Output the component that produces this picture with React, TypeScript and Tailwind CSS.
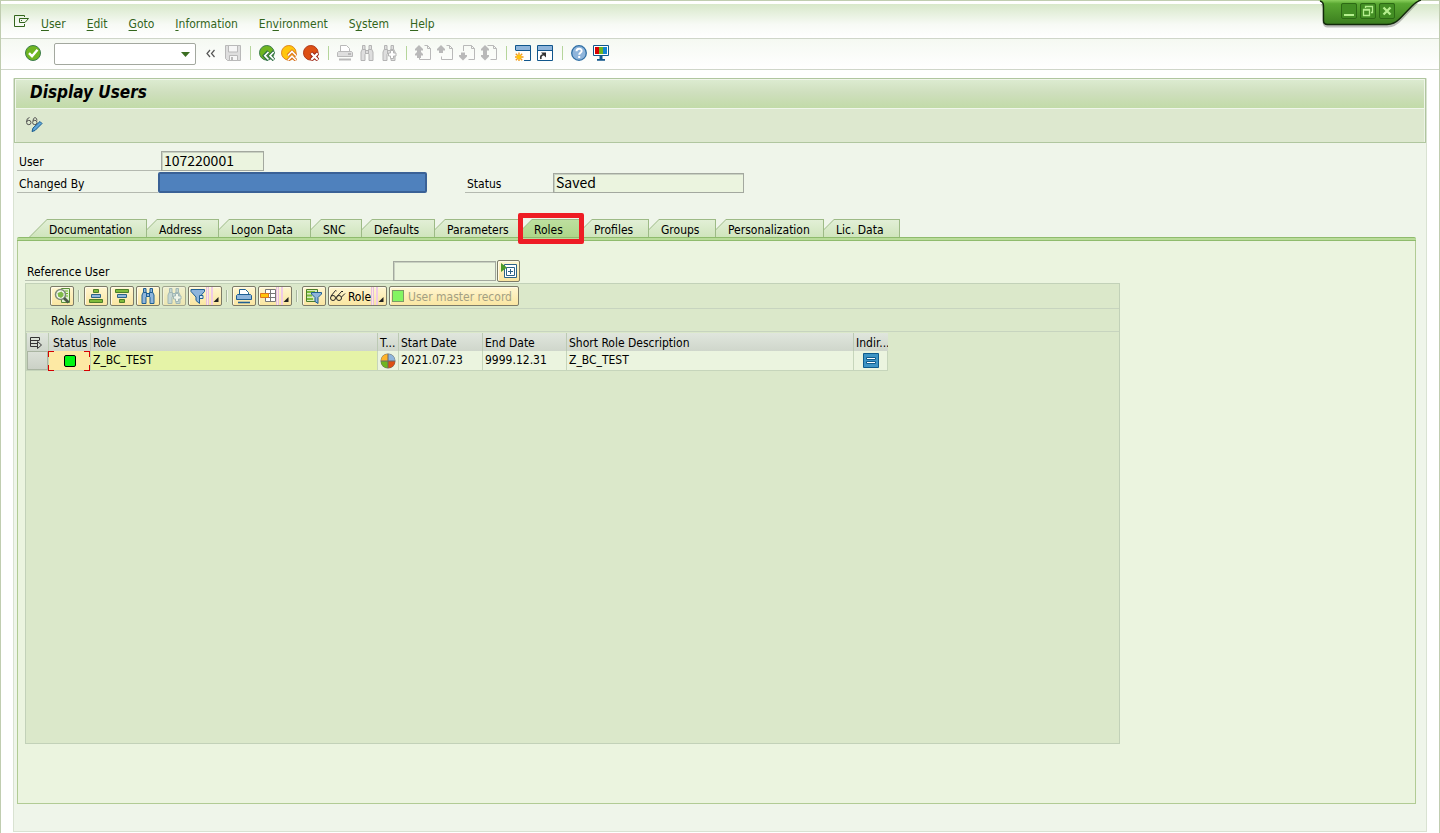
import type { ReactNode } from "react";

const MENUS: [string, string, string][] = [
  ["", "U", "ser"],
  ["", "E", "dit"],
  ["", "G", "oto"],
  ["", "I", "nformation"],
  ["En", "v", "ironment"],
  ["S", "y", "stem"],
  ["", "H", "elp"],
];

function Icon({ children, size = 16 }: { children: ReactNode; size?: number }) {
  return (
    <svg width={size} height={size} viewBox="0 0 16 16" fill="none" aria-hidden="true" className="shrink-0">
      {children}
    </svg>
  );
}

function ToolButton({ label, children }: { label: string; children: ReactNode }) {
  return (
    <button type="button" aria-label={label} className="flex h-[22px] w-[22px] items-center justify-center">
      <Icon>{children}</Icon>
    </button>
  );
}

function ToolSeparator() {
  return (
    <span className="flex w-3 justify-center">
      <span className="h-[14px] w-px bg-[#b5d59b]" />
    </span>
  );
}

function Binoculars({ fill, stroke }: { fill: string; stroke: string }) {
  return (
    <>
      <path
        d="M3.500 .5h2.500v3.500l1 1.500h2l1-1.500V.5h2.500v3.500l1.500 3v8.500h-4v-6l-1-1H7l-1 1v6H2V7l1.500-3z"
        fill={fill}
        stroke={stroke}
      />
      <path d="M3.500 4.500h2.500M10 4.500h2.500M6.500 5v4M9.500 5v4" stroke={stroke} />
    </>
  );
}

function FindPlus({ stroke }: { stroke: string }) {
  return <path d="M9.500 5.500h3v2.500h2.500v3h-2.500v2.500h-3v-2.500H7.500v-3h2z" fill="#fff" stroke={stroke} />;
}

function PageShape() {
  return <path d="M9.500 .5h3l3 3v11h-11v-3M12.500 .5v3h3" stroke="#b9b9b9" />;
}

const UP = "M4 0l4 4v1.500H6V8H2V5.500H0V4z";

function MainToolbar() {
  return (
    <div className="flex h-[31px] items-center border-b border-[#cfd6c9] bg-gradient-to-b from-[#f5f9f2] to-white pb-[2px] pl-[21px]">
      <ToolButton label="Enter">
        <circle cx="8" cy="8" r="7.500" fill="#6fb520" stroke="#3c7c4c" />
        <path d="M4 8.200l3 3 5.500-6.400" stroke="#fff" strokeWidth="2.400" />
      </ToolButton>
      <div className="mt-[2px] ml-[10px] flex h-[22px] w-[142px] items-center rounded-xs border border-[#a3a89f] bg-white">
        <input aria-label="Command" className="h-full min-w-0 flex-1 bg-transparent px-1 outline-none" />
        <button type="button" aria-label="Command history" className="flex w-5 justify-center">
          <svg width="9" height="5" viewBox="0 0 9 5" aria-hidden="true">
            <path d="M0 0h9L4.500 5z" fill="#3c6e22" />
          </svg>
        </button>
      </div>
      <span className="w-1" />
      <ToolButton label="Collapse">
        <path d="M7 5L4 8.500 7 12M11.500 5l-3 3.500 3 3.500" stroke="#555" strokeWidth="1.200" />
      </ToolButton>
      <ToolButton label="Save">
        <path d="M.5 .5h15v15h-13l-2-2z" fill="#dedede" stroke="#b9b9b9" />
        <path d="M3.500 .5h9v6.500h-9zM4.500 10.500h8v5h-8z" fill="#f6f6f6" stroke="#b9b9b9" />
        <path d="M6 12h2v3H6z" fill="#b9b9b9" />
      </ToolButton>
      <ToolSeparator />
      <ToolButton label="Back">
        <circle cx="7.800" cy="7.800" r="7.300" fill="#6fb520" stroke="#3c7c4c" />
        <path d="M9.500 6.500l-4 4.200 4 4.300M15 6.500l-4 4.200 4 4.300" stroke="#2f6e44" strokeWidth="3.600" />
        <path d="M9.500 7l-3.700 3.700L9.500 14.500M14.700 7L11 10.700l3.700 3.800" stroke="#fff" strokeWidth="1.700" />
      </ToolButton>
      <ToolButton label="Exit">
        <circle cx="7.800" cy="7.800" r="7.300" fill="#ffc60b" stroke="#e0851c" />
        <path d="M6.800 10.500l4.200-4 4.200 4M6.800 15.500l4.200-4 4.200 4" stroke="#d9701c" strokeWidth="3.400" />
        <path d="M7 10.500l4-4 4 4M7 15.200l4-4 4 4" stroke="#fff" strokeWidth="1.600" />
      </ToolButton>
      <ToolButton label="Cancel">
        <circle cx="7.800" cy="7.800" r="7.300" fill="#dd5014" stroke="#b0391a" />
        <path d="M8 8l7 7M15 8l-7 7" stroke="#9c2416" strokeWidth="4" />
        <path d="M8.300 8.300l6.400 6.400M14.700 8.300l-6.400 6.400" stroke="#fff" strokeWidth="2.200" />
      </ToolButton>
      <ToolSeparator />
      <ToolButton label="Print">
        <path d="M3.500 6.500v-6h6l3 3v3" fill="#fff" stroke="#b9b9b9" />
        <path d="M1.500 6.500h13l1 1v4H.5v-4z" fill="#dedede" stroke="#b9b9b9" />
        <path d="M11 9h3M2 14.500h12" stroke="#b9b9b9" strokeWidth="2" />
      </ToolButton>
      <ToolButton label="Find">
        <Binoculars fill="#dedede" stroke="#b4b4b4" />
      </ToolButton>
      <ToolButton label="Find next">
        <Binoculars fill="#dedede" stroke="#b4b4b4" />
        <FindPlus stroke="#b4b4b4" />
      </ToolButton>
      <ToolSeparator />
      <ToolButton label="First page">
        <PageShape />
        <path d={UP} fill="#b9b9b9" />
        <path d={UP} fill="#b9b9b9" transform="translate(0 5)" />
      </ToolButton>
      <ToolButton label="Previous page">
        <PageShape />
        <path d={UP} fill="#b9b9b9" />
      </ToolButton>
      <ToolButton label="Next page">
        <path d="M4.500 6v-5.500h8l3 3v11h-6M12.500 .5v3h3" stroke="#b9b9b9" />
        <path d={UP} fill="#b9b9b9" transform="matrix(1 0 0 -1 0 15.500)" />
      </ToolButton>
      <ToolButton label="Last page">
        <path d="M6.500 .5h6l3 3v11h-6M12.500 .5v3h3" stroke="#b9b9b9" />
        <path d={UP} fill="#b9b9b9" />
        <path d={UP} fill="#b9b9b9" transform="matrix(1 0 0 -1 0 15.500)" />
      </ToolButton>
      <ToolSeparator />
      <ToolButton label="New session">
        <path d="M.5 5.500v-5h15v15H9" fill="#fff" stroke="#11568c" />
        <path d="M1 1h14v4H1z" fill="#8fb5db" />
        <path d="M1 5.500h14.500" stroke="#11568c" />
        <path d="M4 7.500v9M-.5 12h9M.8 8.800l6.400 6.400M7.200 8.800L.8 15.200" stroke="#f39a1a" strokeWidth="1.400" />
        <circle cx="4" cy="12" r="2.300" fill="#ffc60b" />
      </ToolButton>
      <ToolButton label="Generate shortcut">
        <path d="M.5 .5h15v15H.5z" fill="#fff" stroke="#11568c" />
        <path d="M1 1h14v4H1z" fill="#8fb5db" />
        <path d="M1 5.500h14.500" stroke="#11568c" />
        <path d="M4 14c-.8-2.500 0-4 3-4.500" stroke="#333" strokeWidth="1.700" />
        <path d="M4 7.500h5v5z" fill="#333" />
      </ToolButton>
      <ToolSeparator />
      <ToolButton label="Help">
        <circle cx="8" cy="8" r="7.300" fill="#8fb5db" stroke="#2f6fa5" strokeWidth="1.300" />
        <path d="M5.500 6.300c0-3.400 5.200-3.200 5.200-.3 0 1.700-2.500 1.900-2.500 3.700" stroke="#fff" strokeWidth="1.900" />
        <path d="M7.200 11h2v2h-2z" fill="#fff" />
      </ToolButton>
      <ToolButton label="Customize layout">
        <path d="M.5 .5h15v10H.5z" fill="#fff" stroke="#11568c" />
        <path d="M2 2h4v7H2z" fill="#d80000" />
        <path d="M6 2h4v7H6z" fill="#6fb520" />
        <path d="M10 2h4v7h-4z" fill="#1486d0" />
        <path d="M6.500 11h3v3h2.500v1.800H4V14h2.500z" fill="#11568c" />
      </ToolButton>
    </div>
  );
}

function WindowControls() {
  return (
    <div className="absolute -top-px right-[17px] h-7 w-[106px]">
      <svg width="106" height="30" viewBox="0 0 106 30" aria-hidden="true" className="absolute top-0 left-0">
        <defs>
          <linearGradient id="frame" x1="0" y1="0" x2="0" y2="1">
            <stop offset="0" stopColor="#8ad05c" />
            <stop offset=".15" stopColor="#5aa832" />
            <stop offset="1" stopColor="#3a7d1e" />
          </linearGradient>
        </defs>
        <path d="M5 4l1.500 4v14.500q1 5 5 5h60q8 0 15-8L102 3z" fill="#000" opacity=".25" />
        <path d="M2 0q5.500 1 5.500 6v14.500q0 4 4 4H71q7 0 13-6L96 6q5-5 9-6z" fill="url(#frame)" />
        <path d="M4 1q3.500 1 3.500 5v14.500q0 4 4 4H71q7 0 13-6L96 6q5-5 9-6" fill="none" stroke="#12290a" strokeWidth="1.400" />
      </svg>
      <div className="relative flex gap-[3px] pt-[3px] pl-[25px]">
        <WindowButton label="Minimize">
          <path d="M3 11h10v2H3z" fill="#b5ef8e" />
        </WindowButton>
        <WindowButton label="Restore">
          <path d="M5.500 5V3.500h7v6H11M3.500 6.500h6v6h-6zM3.500 7h6" stroke="#b5ef8e" strokeWidth="1.300" />
        </WindowButton>
        <WindowButton label="Close">
          <path d="M4.500 4.500l7 7M11.500 4.500l-7 7" stroke="#b5ef8e" strokeWidth="2.300" />
        </WindowButton>
      </div>
    </div>
  );
}

function WindowButton({ label, children }: { label: string; children: ReactNode }) {
  return (
    <button type="button" aria-label={label} className="h-4 w-4 rounded-xs bg-[#438f24] outline outline-[#2c6a14] -outline-offset-1">
      <Icon>{children}</Icon>
    </button>
  );
}

const TABS = [
  { name: "Address", width: "w-[72px]" },
  { name: "Logon Data", width: "w-[92px]" },
  { name: "SNC", width: "w-[51px]" },
  { name: "Defaults", width: "w-[73px]" },
  { name: "Parameters", width: "w-[87px]" },
  { name: "Roles", width: "w-[60px]" },
  { name: "Profiles", width: "w-[67px]" },
  { name: "Groups", width: "w-[67px]" },
  { name: "Personalization", width: "w-[108px]" },
  { name: "Lic. Data", width: "w-[76px]" },
];

function Tabs() {
  return (
    <div role="tablist" className="flex h-[18px] pl-3">
      <button
        type="button"
        role="tab"
        aria-selected={false}
        className="w-[118px] bg-[#9dba86] pt-px pr-px [clip-path:polygon(18px_0,100%_0,100%_100%,0_100%)]"
      >
        <span className="flex h-[17px] items-center bg-gradient-to-b from-[#e2efd6] to-[#d0e5bd] pt-[2px] pl-5 [clip-path:polygon(18px_0,100%_0,100%_100%,1px_100%)]">
          Documentation
        </span>
      </button>
      {TABS.map((tab) => {
        const active = tab.name === "Roles";
        return (
          <div key={tab.name} className="relative">
            <button
              type="button"
              role="tab"
              aria-selected={active}
              className={`${tab.width} block bg-[#9dba86] pt-px pr-px [clip-path:polygon(10px_0,100%_0,100%_100%,0_100%,0_10px)]`}
            >
              <span
                className={`flex h-[17px] items-center bg-gradient-to-b pt-[2px] pl-3 [clip-path:polygon(10px_0,100%_0,100%_100%,0_100%,0_10px)] ${
                  active ? "from-[#bddf9f] to-[#aed689]" : "from-[#e2efd6] to-[#d0e5bd]"
                }`}
              >
                {tab.name}
              </span>
            </button>
            {active && <span className="absolute -top-[6px] -left-1 z-10 h-[31px] w-[66px] rounded-xs border-[5px] border-[#ee1c24]" />}
          </div>
        );
      })}
    </div>
  );
}

const ALV_BUTTON =
  "flex h-5 items-center justify-center rounded-xs border border-[#7c7b68] bg-gradient-to-b from-[#fff6d0] to-[#fae6a2] shadow-[inset_1px_1px_0_#fffbe8]";

function AlvButton({ label, children, dim = false }: { label: string; children: ReactNode; dim?: boolean }) {
  return (
    <button type="button" aria-label={label} className={`${ALV_BUTTON} w-6 ${dim ? "opacity-60" : ""}`}>
      <Icon>{children}</Icon>
    </button>
  );
}

function MenuGrip() {
  return (
    <span className="ml-auto flex h-full items-end pr-[2px]">
      <span className="h-full w-[3px] border-x border-[#e9bfe0] bg-[#fbe9dc]" />
      <span className="ml-[2px] h-full w-[2px] bg-[#efcbe6]" />
      <svg width="6" height="9" viewBox="0 0 6 9" aria-hidden="true">
        <path d="M5.500 1v5H.5z" fill="#222" />
      </svg>
    </span>
  );
}

function AlvMenuButton({ label, children }: { label: string; children: ReactNode }) {
  return (
    <button type="button" aria-label={label} className={`${ALV_BUTTON} w-[34px] pl-px`}>
      <Icon>{children}</Icon>
      <MenuGrip />
    </button>
  );
}

function AlvSeparator() {
  return <span className="mx-[2px] h-3 w-[2px] border-l border-[#a9b79f] bg-[#f0f6e8]" />;
}

function AlvToolbar() {
  return (
    <div className="flex h-[25px] items-center gap-[2px] border-b border-[#c7d4bf] pl-6">
      <AlvButton label="Details">
        <path d="M7.500 .5h8v14h-8z" fill="#e3f3d3" stroke="#5b8f38" />
        <path d="M11 3h3M11 5.500h3M11 8h3" stroke="#6fb520" />
        <circle cx="6.500" cy="6.500" r="5" fill="#f6faf3" stroke="#7d8a78" strokeWidth="1.500" />
        <path d="M3.500 5l4-1.500 2 2v2.500l-2.500 2-3-1.500z" fill="#7fbb4a" />
        <path d="M10 10l4.500 4.500" stroke="#4b5a48" strokeWidth="2.800" />
      </AlvButton>
      <AlvSeparator />
      <AlvButton label="Sort ascending">
        <path d="M5.500 1.500h5v3h-5zM1.500 11.500h13v3h-13z" fill="#7fbb3b" stroke="#4b7e2a" />
        <path d="M3.500 6.500h9v3h-9z" fill="#8fb5db" stroke="#2c6388" />
      </AlvButton>
      <AlvButton label="Sort descending">
        <path d="M1.500 1.500h13v3h-13zM5.500 11.500h5v3h-5z" fill="#7fbb3b" stroke="#4b7e2a" />
        <path d="M3.500 6.500h9v3h-9z" fill="#8fb5db" stroke="#2c6388" />
      </AlvButton>
      <AlvButton label="Find in list">
        <Binoculars fill="#8fb5db" stroke="#1f5f93" />
      </AlvButton>
      <AlvButton label="Find next in list" dim>
        <Binoculars fill="#b9cdd8" stroke="#7a97a8" />
        <FindPlus stroke="#7a97a8" />
      </AlvButton>
      <AlvMenuButton label="Filter">
        <path d="M1 1.500h13.500v2L9.500 9v6.500L6 12.500V9L1 3.500z" fill="#8fb5db" stroke="#1f5f93" />
        <path d="M9.500 13V7.500h3.500v3H9.500" fill="#dceaf5" stroke="#1f5f93" />
      </AlvMenuButton>
      <AlvSeparator />
      <AlvButton label="Print list">
        <path d="M3.500 6.500v-5h6l3 3v2" fill="#fff" stroke="#1f5f93" />
        <path d="M1.500 6.500h13l1 1v4H.5v-4z" fill="#8fb5db" stroke="#1f5f93" />
        <path d="M2 14.500h12" stroke="#1f5f93" strokeWidth="1.600" />
      </AlvButton>
      <AlvMenuButton label="Choose layout">
        <path d="M5.500 1.500h10v12h-10zM5.500 5.500h10M5.500 9.500h10M10.500 1.500v12" fill="#fff" stroke="#777" />
        <path d="M.5 5.500h8v4h-8z" fill="#ffc60b" stroke="#e0751c" />
      </AlvMenuButton>
      <AlvSeparator />
      <AlvButton label="Filter list">
        <path d="M.5 1.500h11v12H.5z" fill="#d7ebbf" stroke="#4b7e2a" />
        <path d="M1 4h8M1 7.500h5M1 11h6" stroke="#7fbb3b" strokeWidth="2" />
        <path d="M5.500 4.500h10v1.500L12 9.500v6l-3-2v-4L5.500 6z" fill="#8fb5db" stroke="#1f5f93" />
      </AlvButton>
      <button type="button" className={`${ALV_BUTTON} w-[59px] pl-px`}>
        <Icon>
          <circle cx="3" cy="10" r="2.500" stroke="#222" />
          <circle cx="9" cy="10" r="2.500" stroke="#222" />
          <path d="M1 8l4.500-5.500 1 .5M7 8.500l5-5.500 1 1M11.500 9L15 5.500" stroke="#222" />
        </Icon>
        <span className="ml-[2px] pt-px">Role</span>
        <MenuGrip />
      </button>
      <button type="button" disabled className={`${ALV_BUTTON} w-[130px] !justify-start gap-1 pl-[2px] whitespace-nowrap text-[#a39f83]`}>
        <span className="h-3 w-3 shrink-0 border border-[#7c9b65] bg-[#83f562]" />
        <span className="pt-px">User master record</span>
      </button>
    </div>
  );
}

const HEAD = "h-[18px] border-l border-[#bccab4] bg-gradient-to-b from-[#e0e6dd] to-[#cfd6cb] pt-[2px] pl-[2px] text-left font-normal";
const CELL = "h-5 border-b border-l border-[#c6d5bb] bg-[#ebf4df] pb-[2px] pl-[2px]";

function Corner({ place }: { place: string }) {
  return <span className={`absolute h-[6px] w-[6px] ${place}`} />;
}

function RoleTable() {
  return (
    <table className="mt-px w-[862px] table-fixed border-separate border-spacing-0 whitespace-nowrap">
      <colgroup>
        <col className="w-[22px]" />
        <col className="w-[42px]" />
        <col className="w-[287px]" />
        <col className="w-[21px]" />
        <col className="w-[84px]" />
        <col className="w-[84px]" />
        <col className="w-[287px]" />
        <col className="w-[35px]" />
      </colgroup>
      <thead>
        <tr className="leading-4">
          <th className={HEAD}>
            <button type="button" aria-label="Select all" className="ml-px block">
              <svg width="13" height="12" viewBox="0 0 13 12" fill="none" stroke="#333" aria-hidden="true">
                <path d="M9.500 3V.5h-9v9H7M.5 3.500h9M.5 6.500H7M7.500 4.500v7l4-3.500z" />
              </svg>
            </button>
          </th>
          <th className={`${HEAD} !pl-1`}>Status</th>
          <th className={HEAD}>Role</th>
          <th className={`${HEAD} overflow-hidden`}>T...</th>
          <th className={HEAD}>Start Date</th>
          <th className={HEAD}>End Date</th>
          <th className={HEAD}>Short Role Description</th>
          <th className={`${HEAD} overflow-hidden`}>Indir...</th>
        </tr>
      </thead>
      <tbody>
        <tr className="leading-4">
          <td className={`${CELL} !bg-[#cfd5ca] !p-0`}>
            <button
              type="button"
              aria-label="Select row"
              className="block h-[19px] w-full border border-[#aab5a2] bg-gradient-to-b from-[#dbe0d7] to-[#cbd1c6]"
            />
          </td>
          <td className={`${CELL} relative !bg-[#fde9a4] !p-0`}>
            <span className="mx-auto block h-3 w-3 rounded-xs border border-black bg-[#00f514]" />
            <Corner place="top-0 -left-px border-t border-l border-[#d60000]" />
            <Corner place="top-0 right-0 border-t border-r border-[#d60000]" />
            <Corner place="-bottom-px -left-px border-b border-l border-[#d60000]" />
            <Corner place="right-0 -bottom-px border-r border-b border-[#d60000]" />
          </td>
          <td className={`${CELL} !bg-[#e5f3a7]`}>Z_BC_TEST</td>
          <td className={`${CELL} !p-0`}>
            <svg width="16" height="16" viewBox="0 0 16 16" className="mx-auto" aria-hidden="true">
              <circle cx="8" cy="8" r="7.500" fill="#666" />
              <path d="M7.500 7.500V1A6.500 6.500 0 0 0 1 7.500z" fill="#ffb42a" />
              <path d="M8.500 7.500V1A6.500 6.500 0 0 1 15 7.500z" fill="#8fb5db" />
              <path d="M7.500 8.500V15A6.500 6.500 0 0 1 1 8.500z" fill="#6fb520" />
              <path d="M8.500 8.500V15A6.500 6.500 0 0 0 15 8.500z" fill="#dd5014" />
            </svg>
          </td>
          <td className={CELL}>2021.07.23</td>
          <td className={CELL}>9999.12.31</td>
          <td className={CELL}>Z_BC_TEST</td>
          <td className={`${CELL} border-r !p-0`}>
            <svg width="16" height="15" viewBox="0 0 16 15" className="mx-auto" aria-hidden="true">
              <path d="M.5 .5h15v14H.5z" fill="#3d94c5" stroke="#0e5c8e" />
              <path d="M3.500 4.500h9v2h-9zM3.500 8.500h9v2h-9z" fill="#fff" stroke="#0e5c8e" />
            </svg>
          </td>
        </tr>
      </tbody>
    </table>
  );
}

const LABEL = "h-[22px] border-b border-[#b4b9b0] pt-px pl-[2px] leading-[24px]";
const FIELD =
  "h-5 border border-[#a3a89f] bg-[#ebf4df] px-[2px] pb-[2px] font-['Noto_Sans_CJK_KR',sans-serif] text-sm font-normal shadow-[inset_1px_1px_0_#c9d1c2] outline-none";

export default function App() {
  return (
    <div className="relative flex min-h-screen flex-col border-x border-t border-[#c0cdb0] bg-white font-['DejaVu_Sans_Condensed','DejaVu_Sans',sans-serif] text-xs text-black">
      <WindowControls />
      <nav className="mt-[3px] flex h-[35px] items-center gap-[21px] border-b border-[#cfd6c9] bg-gradient-to-b from-[#d8e8ca] via-[#f7faf5] via-60% to-white pt-[6px] pl-[13px] text-[#33651c]">
        <button type="button" aria-label="Window menu" className="-mr-[9px] mb-[6px]">
          <svg width="15" height="12" viewBox="0 0 15 12" fill="none" stroke="#33651c" aria-hidden="true" className="block">
            <path d="M10.500 2V.5h-10v11h10V9M10.500 3.500h-5v4h5.500M7 5.500h1M9 3.500h5.500L11 7.500" />
          </svg>
        </button>
        {MENUS.map(([before, key, after]) => (
          <button type="button" key={key}>
            {before}
            <span className="underline underline-offset-2">{key}</span>
            {after}
          </button>
        ))}
      </nav>
      <MainToolbar />
      <main className="mx-3 mt-2 mb-px flex flex-1 flex-col border border-[#d9e2d2] border-t-transparent bg-[#eff5ea]">
        <header className="-mt-px border border-[#b0c69f]">
          <h1 className="h-[30px] border border-[#f0f6ea] bg-gradient-to-b from-[#dcebd0] via-[#cfdfbe] via-45% to-[#c2dba8] pl-[14px] text-[17px] leading-[25px] font-bold italic">
            Display Users
          </h1>
          <div className="h-[33px] border-x border-[#edf4e7] bg-[#dde8cf] pt-2 pl-[10px]">
            <button type="button" aria-label="Display or change" className="block">
              <svg width="17" height="16" viewBox="0 0 17 16" fill="none" aria-hidden="true">
                <circle cx="2.800" cy="5.500" r="2.200" stroke="#555" />
                <circle cx="8.800" cy="5.500" r="2.200" stroke="#555" />
                <path d="M.5 5q0-4 3-4.500M7 4q0-3 2-3.500 2 .5 2 3" stroke="#555" />
                <path d="M6 14.500l1-3.500 7-6.500 2 2-7 7z" fill="#5fa5d8" stroke="#165a8f" />
              </svg>
            </button>
          </div>
        </header>
        <form className="mt-[6px] ml-[3px]">
          <div className="flex h-[22px]">
            <label htmlFor="user" className={`${LABEL} w-36`}>User</label>
            <input id="user" readOnly defaultValue="107220001" className={`${FIELD} mt-[2px] w-[103px]`} />
          </div>
          <div className="flex h-[22px]">
            <label htmlFor="changed-by" className={`${LABEL} w-[141px]`}>Changed By</label>
            <input id="changed-by" readOnly className="mt-px h-[21px] w-[269px] rounded-xs border-2 border-[#3a6196] bg-[#4f81bd] outline-none" />
            <label htmlFor="status" className={`${LABEL} ml-[38px] w-[88px]`}>Status</label>
            <input id="status" readOnly defaultValue="Saved" className={`${FIELD} mt-[2px] w-[191px]`} />
          </div>
        </form>
        <section className="mt-[26px] mr-[10px] mb-[27px] ml-[3px] flex flex-1 flex-col">
          <Tabs />
          <div className="h-1 rounded-t-xs border-y border-[#8fbb6d] bg-[#b9dc99]" />
          <div className="flex-1 border border-t-0 border-[#b1cb94] bg-[#ebf4df] px-[7px] pt-[19px]">
            <div className="flex h-[22px]">
              <label htmlFor="reference-user" className="h-[21px] w-[368px] border-b border-[#b9c2b1] pt-px pl-[2px] leading-[23px]">
                Reference User
              </label>
              <input id="reference-user" readOnly className={`${FIELD} mt-px w-[103px]`} />
              <button type="button" aria-label="Choose user" className={`${ALV_BUTTON} ml-px !h-[22px] w-[23px]`}>
                <Icon>
                  <path d="M3.500 1.500h12v13h-12z" fill="#fff" stroke="#2c6388" />
                  <path d="M5.500 4.500h8v8h-8zM9.500 6v5M7 8.500h5" stroke="#2c6388" />
                  <path d="M0 0l6 4.500L0 9z" fill="#4b9a2a" />
                </Icon>
              </button>
            </div>
            <div className="mt-px h-[461px] max-w-[1095px] border border-[#c2d1b8] bg-[#dbe8ca]">
              <AlvToolbar />
              <h2 className="h-[23px] border-b border-[#c7d4bf] pl-[25px] leading-[24px]">Role Assignments</h2>
              <RoleTable />
            </div>
          </div>
        </section>
      </main>
    </div>
  );
}
